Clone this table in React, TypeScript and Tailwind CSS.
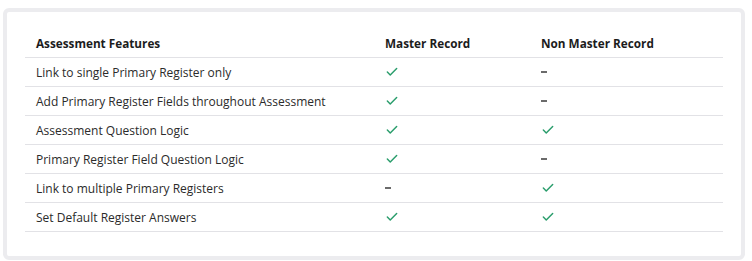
import { Check } from "lucide-react";

type Row = {
  feature: string;
  master: boolean;
  nonMaster: boolean;
};

const rows: Row[] = [
  { feature: "Link to single Primary Register only", master: true, nonMaster: false },
  { feature: "Add Primary Register Fields throughout Assessment", master: true, nonMaster: false },
  { feature: "Assessment Question Logic", master: true, nonMaster: true },
  { feature: "Primary Register Field Question Logic", master: true, nonMaster: false },
  { feature: "Link to multiple Primary Registers", master: false, nonMaster: true },
  { feature: "Set Default Register Answers", master: true, nonMaster: true },
];

function Mark({ on }: { on: boolean }) {
  return on ? (
    <Check size={14} strokeWidth={2.5} className="text-[#2a9d6c]" />
  ) : (
    <span className="block h-[2px] w-[6px] bg-[#6b6b6b]" />
  );
}

export default function App() {
  return (
    <div className="min-h-[261px] bg-white pb-[3px] pl-[3px] pr-[7px] pt-[8px] font-['Open_Sans',sans-serif]">
      <div className="rounded-md border-4 border-[#ececef] bg-white px-[18px] pb-[24px] pt-[16px]">
        <table className="w-[698px] border-collapse text-left text-[12px] text-[#2b2b2b]">
          <thead>
            <tr className="h-[29px] border-b border-[#e2e2e6] text-[11.75px]">
              <th className="w-[350px] pl-[11px] pt-[3px] font-bold text-[#1c1c1c]">Assessment Features</th>
              <th className="w-[156px] pl-[10px] pt-[3px] font-bold text-[#1c1c1c]">Master Record</th>
              <th className="pl-[10px] pt-[3px] font-bold text-[#1c1c1c]">Non Master Record</th>
            </tr>
          </thead>
          <tbody>
            {rows.map((r) => (
              <tr key={r.feature} className="h-[29px] border-b border-[#e2e2e6]">
                <td className="pl-[11px] pt-[2px]">{r.feature}</td>
                <td className="pl-[10px]">
                  <Mark on={r.master} />
                </td>
                <td className="pl-[10px]">
                  <Mark on={r.nonMaster} />
                </td>
              </tr>
            ))}
          </tbody>
        </table>
      </div>
    </div>
  );
}
